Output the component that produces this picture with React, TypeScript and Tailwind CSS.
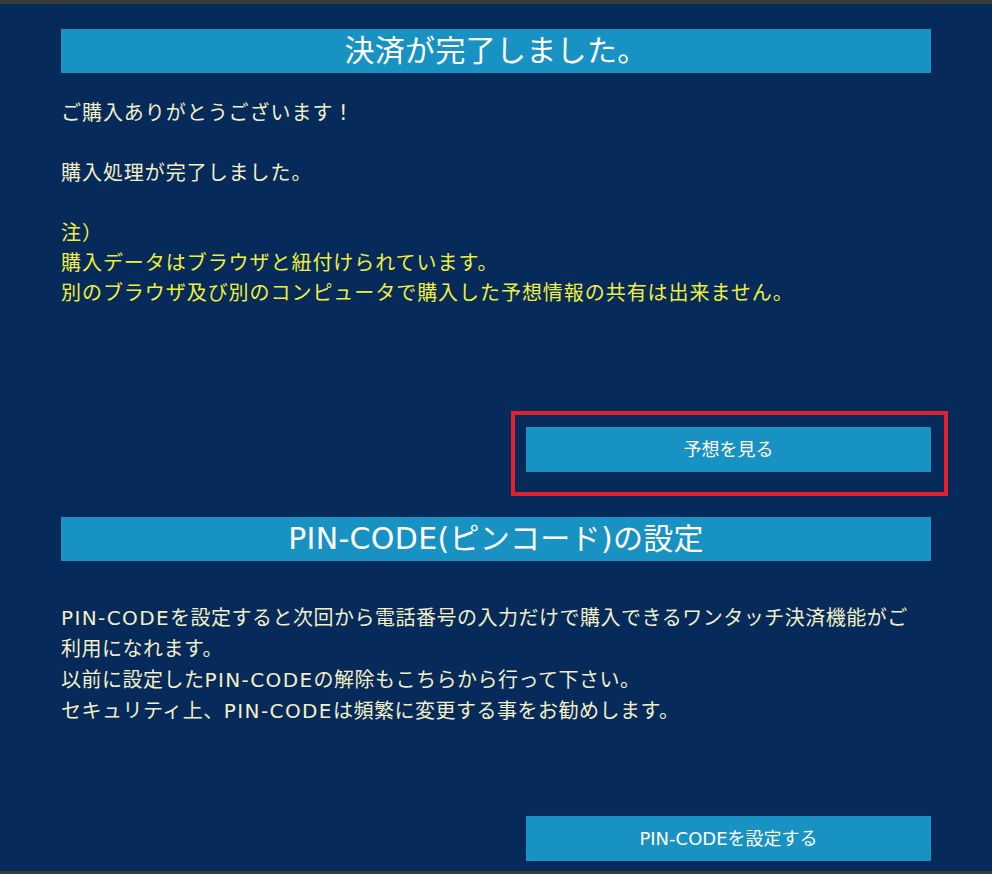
import React from 'react';

const font = { fontFamily: '"DejaVu Sans", "Noto Sans CJK JP", sans-serif' };

const SectionBar: React.FC<{ title: React.ReactNode }> = ({ title }) => (
  <div className="h-[44px] bg-[#1891c3] flex items-center justify-center text-white text-[30px] leading-none tracking-[0.3px]">
    {title}
  </div>
);

const ActionButton: React.FC<{ label: string }> = ({ label }) => (
  <button className="w-[405px] h-[45px] bg-[#1891c3] text-white text-[18px] flex items-center justify-center">
    {label}
  </button>
);

const Pin = () => <span className="tracking-[1.4px]">PIN-CODE</span>;

export default function App() {
  return (
    <div className="min-h-[874px] bg-[#3a3a3a] flex flex-col" style={font}>
      <div className="h-[4px] bg-[#3a3a3a]" />
      <main className="bg-[#062a5a] pt-[25px] pb-[10px]">
        <div className="w-[870px] mx-auto">
          <SectionBar title="決済が完了しました。" />

          <div className="mt-[25px] text-[20px] leading-[30px] tracking-[0.95px]">
            <p className="text-[#f3efc8]">ご購入ありがとうございます！</p>
            <p className="text-[#f3efc8] mt-[30px]">購入処理が完了しました。</p>
            <div className="text-[#f0f03c] mt-[30px]">
              <p>注）</p>
              <p>購入データはブラウザと紐付けられています。</p>
              <p>別のブラウザ及び別のコンピュータで購入した予想情報の共有は出来ません。</p>
            </div>
          </div>

          <div className="mt-[119px] flex justify-end">
            <div className="relative">
              <ActionButton label="予想を見る" />
              {/* highlight frame */}
              <div className="absolute left-[-15px] right-[-17px] top-[-16px] bottom-[-24px] border-4 border-[#e3202b] pointer-events-none" />
            </div>
          </div>

          <div className="mt-[45px]">
            <SectionBar title="PIN-CODE(ピンコード)の設定" />
          </div>

          <div className="mt-[42px] text-[20px] leading-[31px] tracking-[0.5px] text-[#f3efc8]">
            <p>
              <span className="whitespace-nowrap">
                <Pin />を設定すると次回から電話番号の入力だけで購入できるワンタッチ決済機能がご
              </span>
              <br />
              利用になれます。
            </p>
            <p>以前に設定した<Pin />の解除もこちらから行って下さい。</p>
            <p>セキュリティ上、<Pin />は頻繁に変更する事をお勧めします。</p>
          </div>

          <div className="mt-[89px] flex justify-end">
            <ActionButton label="PIN-CODEを設定する" />
          </div>
        </div>
      </main>
      <div className="flex-1 bg-[#3a3a3a]" />
    </div>
  );
}
